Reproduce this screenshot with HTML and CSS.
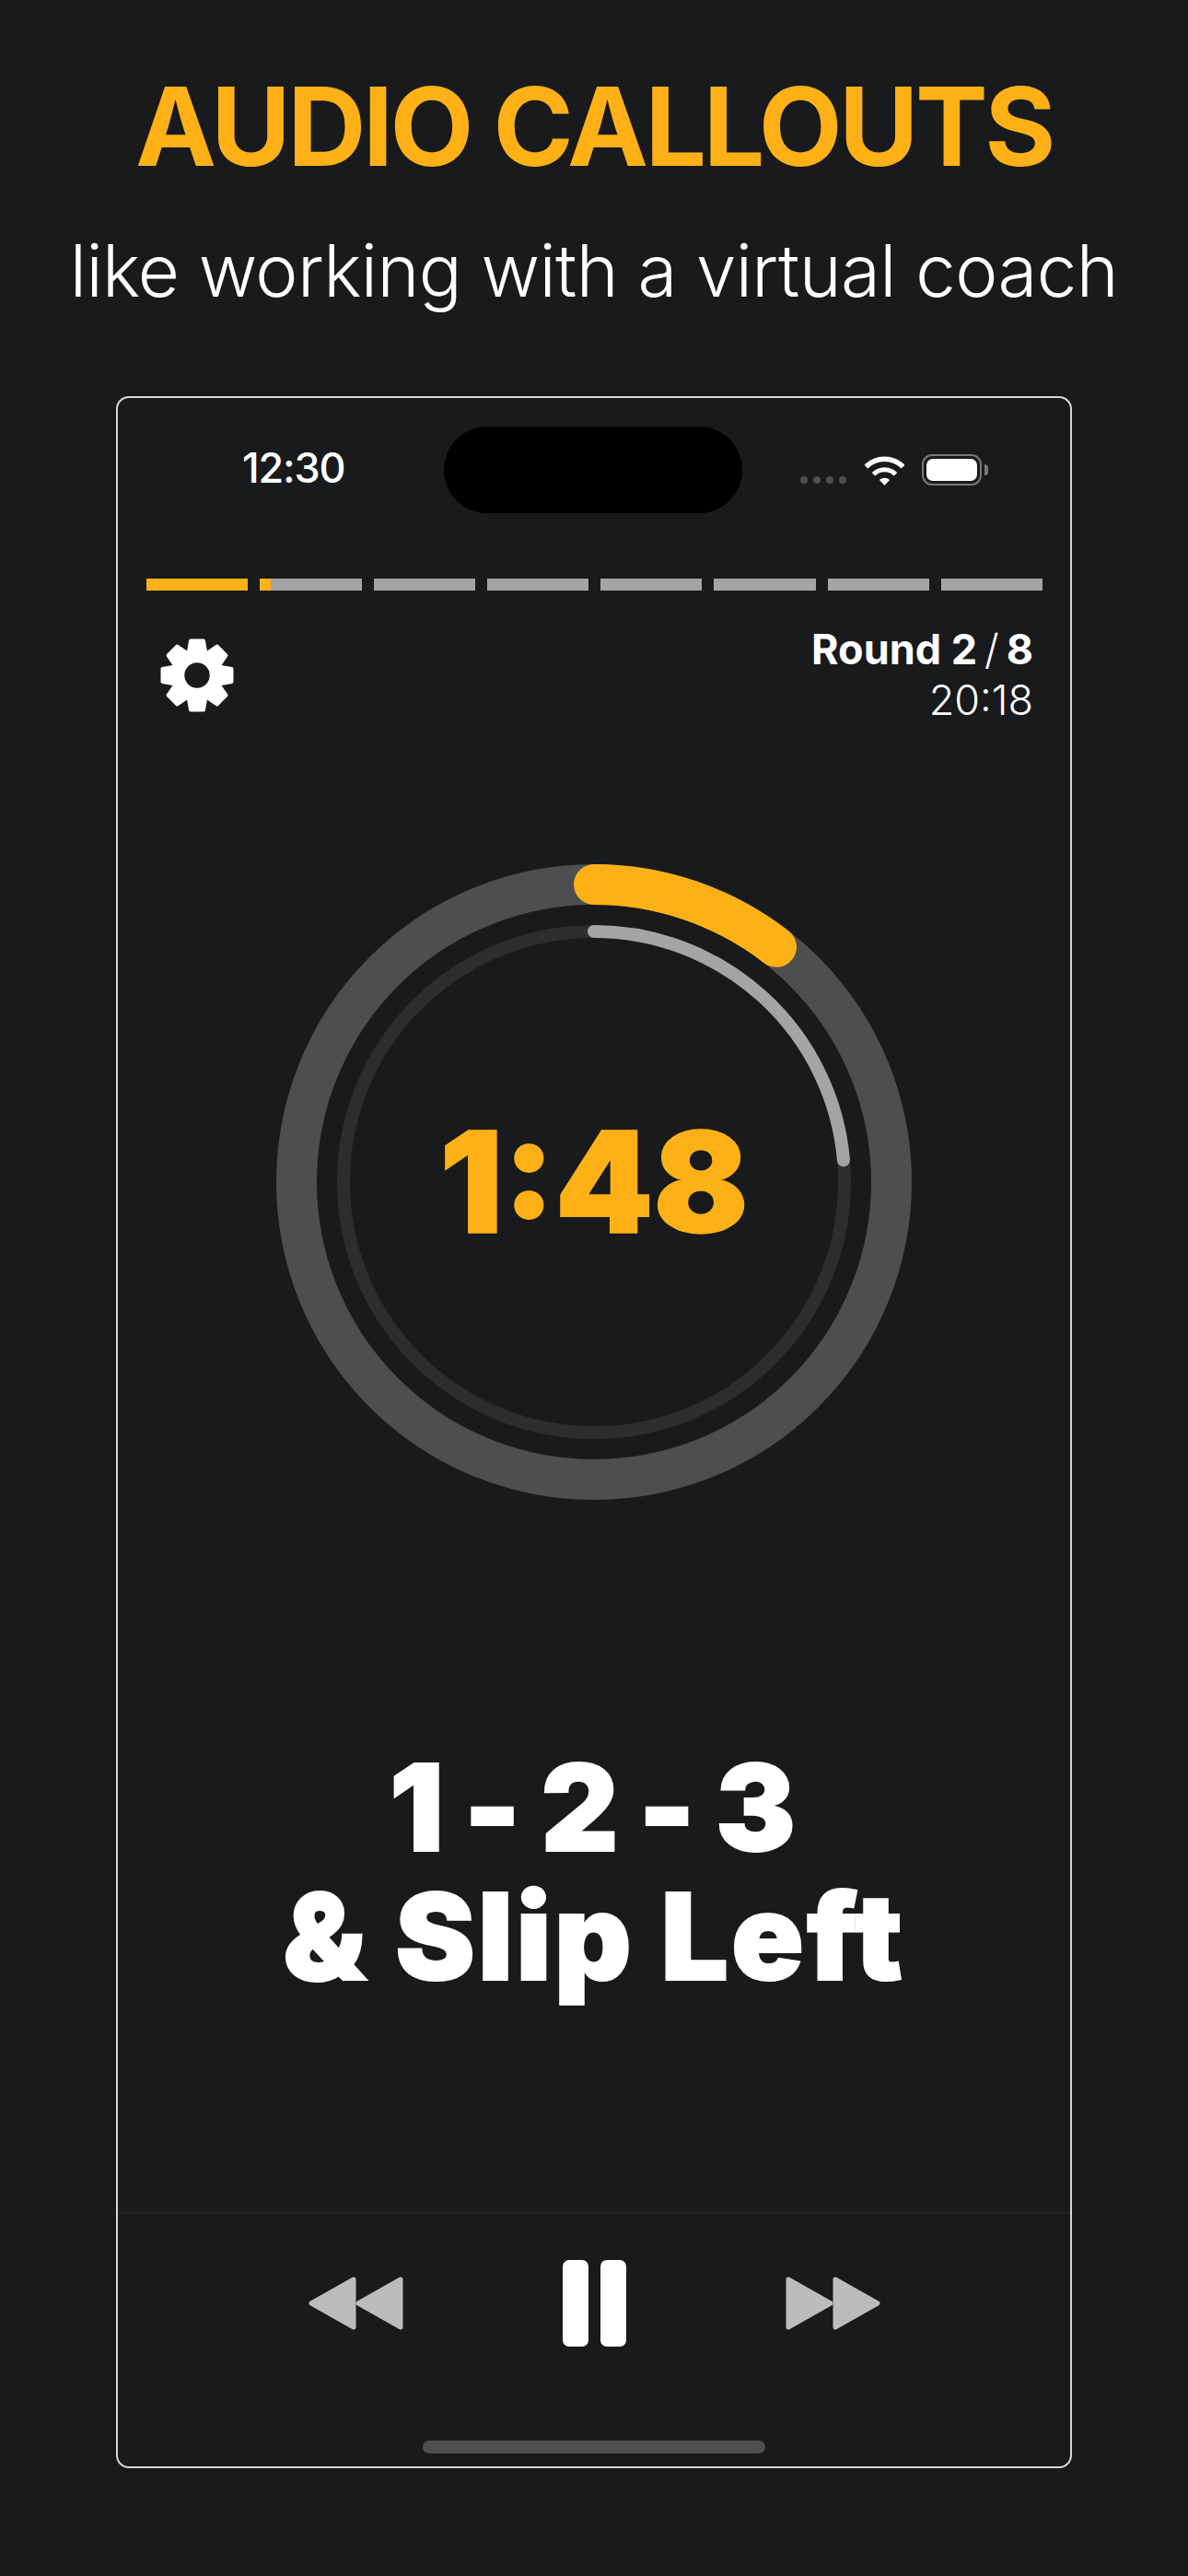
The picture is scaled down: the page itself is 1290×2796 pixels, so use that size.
FILE: index.html
```html
<!DOCTYPE html>
<html lang="en">
<head>
    <meta charset="UTF-8">
    <meta name="viewport" content="width=device-width, initial-scale=1.0">
    <link rel="stylesheet" href="styles.css">
</head>
<body>

<header class="intro">
    <h1>AUDIO CALLOUTS</h1>
    <p>like working with a virtual coach</p>
</header>

<div class="phone">
    <div class="status-bar">
        <span class="clock">12:30</span>
        <div class="island"></div>
        <div class="status-icons">
            <div class="signal"><i></i><i></i><i></i><i></i></div>
            <svg class="wifi" width="43" height="32" viewBox="0 0 43 32">
                <path d="M1.35 11.55A28.5 28.5 0 0 1 41.65 11.55" fill="none" stroke="#fff" stroke-width="5.5"/>
                <path d="M9.48 19.68A17 17 0 0 1 33.52 19.68" fill="none" stroke="#fff" stroke-width="5"/>
                <path d="M21.5 31.7L15.84 26.04A8 8 0 0 1 27.16 26.04Z" fill="#fff"/>
            </svg>
            <div class="battery"><div class="battery-fill"></div></div>
        </div>
    </div>

    <div class="rounds">
        <div class="round-bar done"></div>
        <div class="round-bar"><div class="round-fill"></div></div>
        <div class="round-bar"></div>
        <div class="round-bar"></div>
        <div class="round-bar"></div>
        <div class="round-bar"></div>
        <div class="round-bar"></div>
        <div class="round-bar"></div>
    </div>

    <div class="info-row">
        <svg class="gear" width="80" height="80" viewBox="0 0 80 80">
            <defs>
                <polygon id="tooth" points="31,20 31,14 33,2.5 47,2.5 49,14 49,20" fill="#fff" stroke="#fff" stroke-width="4" stroke-linejoin="round"/>
            </defs>
            <use href="#tooth"/>
            <use href="#tooth" transform="rotate(45 40 40)"/>
            <use href="#tooth" transform="rotate(90 40 40)"/>
            <use href="#tooth" transform="rotate(135 40 40)"/>
            <use href="#tooth" transform="rotate(180 40 40)"/>
            <use href="#tooth" transform="rotate(225 40 40)"/>
            <use href="#tooth" transform="rotate(270 40 40)"/>
            <use href="#tooth" transform="rotate(315 40 40)"/>
            <circle cx="40" cy="40" r="20.85" fill="none" stroke="#fff" stroke-width="14.3"/>
        </svg>
        <div class="round-info">
            <div class="round-count">Round 2<span class="slash">/</span>8</div>
            <div class="round-total">20:18</div>
        </div>
    </div>

    <div class="timer">
        <svg width="690" height="690" viewBox="0 0 690 690">
            <circle cx="345" cy="345" r="323" fill="none" stroke="#4c4e50" stroke-width="44"/>
            <circle cx="345" cy="345" r="272" fill="none" stroke="#2c2d2f" stroke-width="14"/>
            <path d="M345 22A323 323 0 0 1 543 89.8" fill="none" stroke="#fdb117" stroke-width="44" stroke-linecap="round"/>
            <path d="M345 73A272 272 0 0 1 616 321.3" fill="none" stroke="#a3a4a6" stroke-width="14" stroke-linecap="round"/>
        </svg>
        <span class="timer-value">1:48</span>
    </div>

    <div class="callout">
        <div class="callout-count">1 - 2 - 3</div>
        <div>&amp; Slip Left</div>
    </div>

    <div class="controls">
        <svg width="103" height="58" viewBox="0 0 103 58">
            <polygon points="3,29 49,3 49,55" fill="#bcbcbc" stroke="#bcbcbc" stroke-width="5" stroke-linejoin="round"/>
            <polygon points="54,29 100,3 100,55" fill="#bcbcbc" stroke="#bcbcbc" stroke-width="5" stroke-linejoin="round"/>
        </svg>
        <div class="pause"><i></i><i></i></div>
        <svg width="103" height="58" viewBox="0 0 103 58">
            <polygon points="3,3 49,29 3,55" fill="#bcbcbc" stroke="#bcbcbc" stroke-width="5" stroke-linejoin="round"/>
            <polygon points="54,3 100,29 54,55" fill="#bcbcbc" stroke="#bcbcbc" stroke-width="5" stroke-linejoin="round"/>
        </svg>
    </div>

    <div class="home-bar"></div>
</div>

</body>
</html>
```

FILE: styles.css
```css
body {
    margin: 0;
    height: 2796px;
    overflow: hidden;
    font-family: Inter, "Liberation Sans", sans-serif;
    background-color: #181a1c;
    color: white;
}

.intro {
    height: 430px;
    text-align: center;
    overflow: hidden;
}

.intro h1 {
    margin: 70px 0 0;
    font-size: 118px;
    line-height: 134px;
    font-weight: 700;
    letter-spacing: -3.5px;
    color: #fdb117;
}

.intro p {
    margin: 43px 0 0;
    font-size: 78px;
    line-height: 94px;
    font-weight: 350;
    letter-spacing: -0.6px;
}

.phone {
    box-sizing: border-box;
    width: 1038px;
    height: 2249px;
    margin-left: 126px;
    border: 2px solid #d8d8d8;
    border-radius: 14px;
    display: flex;
    flex-direction: column;
    align-items: stretch;
}

.status-bar {
    display: flex;
    align-items: flex-start;
    height: 196px;
}

.clock {
    width: 354px;
    margin-top: 49px;
    padding-left: 135px;
    box-sizing: border-box;
    font-size: 45px;
    line-height: 54px;
    font-weight: 500;
    letter-spacing: -1.2px;
}

.island {
    width: 324px;
    height: 94px;
    margin-top: 31px;
    border-radius: 47px;
    background-color: black;
}

.status-icons {
    display: flex;
    align-items: flex-end;
    margin-top: 61px;
    margin-left: 63px;
}

.signal {
    display: flex;
    gap: 6px;
    margin-bottom: 2px;
}

.signal i {
    width: 8px;
    height: 8px;
    border-radius: 50%;
    background-color: #4d4f50;
}

.wifi {
    margin-left: 20px;
}

.battery {
    box-sizing: border-box;
    position: relative;
    width: 65px;
    height: 34px;
    margin-left: 19px;
    padding: 3px;
    border: 2px solid #77797b;
    border-radius: 11px;
}

.battery::after {
    content: "";
    position: absolute;
    right: -9px;
    top: 9px;
    width: 4px;
    height: 12px;
    border-radius: 0 4px 4px 0;
    background-color: #77797b;
}

.battery-fill {
    height: 100%;
    border-radius: 7px;
    background-color: white;
}

.rounds {
    display: flex;
    gap: 13px;
    margin: 0 30px 0 31px;
}

.round-bar {
    flex: 1;
    height: 13px;
    background-color: #a3a4a6;
}

.round-bar.done {
    background-color: #fdb117;
}

.round-fill {
    width: 12px;
    height: 100%;
    background-color: #fdb117;
}

.info-row {
    display: flex;
    justify-content: space-between;
    align-items: flex-start;
    margin-top: 40px;
    padding: 12px 40px 0 46px;
    height: 128px;
}

.round-info {
    text-align: right;
    font-size: 45px;
    line-height: 55px;
    margin-top: -16px;
}

.round-count {
    font-weight: 700;
}

.slash {
    margin: 0 8px;
    font-weight: 300;
}

.round-total {
    font-weight: 300;
}

.timer {
    position: relative;
    align-self: center;
    width: 690px;
    height: 690px;
    margin-top: 117px;
}

.timer svg {
    display: block;
}

.timer-value {
    position: absolute;
    left: 0;
    right: 0;
    top: 0;
    line-height: 690px;
    text-align: center;
    font-size: 152px;
    font-weight: 900;
    -webkit-text-stroke: 1.5px #fdb117;
    color: #fdb117;
}

.callout {
    margin-top: 264px;
    text-align: center;
    font-size: 130px;
    line-height: 140px;
    font-weight: 900;
    letter-spacing: 3px;
    -webkit-text-stroke: 2px white;
}

.callout-count {
    word-spacing: -10px;
}

.controls {
    display: flex;
    justify-content: center;
    align-items: center;
    gap: 173px;
    height: 193px;
    padding-bottom: 2px;
    margin-top: auto;
    border-top: 2px solid #1f2022;
}

.pause {
    display: flex;
    gap: 13px;
}

.pause i {
    width: 28px;
    height: 94px;
    border-radius: 7px;
    background-color: white;
}

.home-bar {
    align-self: center;
    width: 372px;
    height: 14px;
    margin-top: 51px;
    margin-bottom: 14px;
    border-radius: 7px;
    background-color: #4d4f50;
}
```
